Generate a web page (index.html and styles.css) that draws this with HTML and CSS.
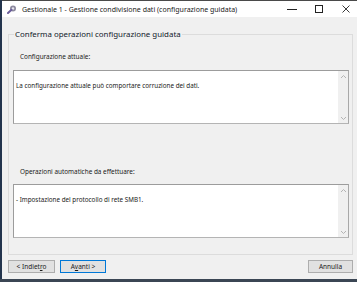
FILE: index.html
```html
<!DOCTYPE html>
<html lang="it">
<head>
    <meta charset="UTF-8">
    <title>Gestionale 1 - Gestione condivisione dati</title>
    <link rel="stylesheet" href="styles.css">
</head>
<body>

    <div class="window">
        <div class="titlebar">
            <svg class="app-icon" width="10" height="9" viewBox="0 0 10 9">
                <circle cx="6" cy="3.5" r="3" fill="#8d8a9e"/>
                <circle cx="6" cy="3.5" r="1.2" fill="#e8e6f0"/>
                <path d="M1 8 L4.5 4.8" stroke="#6b5d9a" stroke-width="2" stroke-linecap="round"/>
            </svg>
            <span class="title">Gestionale 1 - Gestione condivisione dati (configurazione guidata)</span>
            <div class="controls">
                <svg width="10" height="10" viewBox="0 0 10 10"><path d="M0 5.5 H10" stroke="#222" stroke-width="1"/></svg>
                <svg width="10" height="10" viewBox="0 0 10 10"><rect x="1.5" y="1.5" width="7" height="7" fill="none" stroke="#222" stroke-width="1"/></svg>
                <svg width="10" height="10" viewBox="0 0 10 10"><path d="M1.5 1.5 L8.5 8.5 M8.5 1.5 L1.5 8.5" stroke="#222" stroke-width="0.9"/></svg>
            </div>
        </div>

        <div class="content">
            <fieldset class="group">
                <legend>Conferma operazioni configurazione guidata</legend>

                <div class="field-label first">Configurazione attuale:</div>
                <div class="textbox">
                    <div class="textbox-text">La configurazione attuale può comportare corruzione dei dati.</div>
                    <div class="scrollbar">
                        <svg width="7" height="5" viewBox="0 0 7 5"><path d="M1 4 L3.5 1.5 L6 4" fill="none" stroke="#b4b4b4" stroke-width="1"/></svg>
                        <svg width="7" height="5" viewBox="0 0 7 5"><path d="M1 1 L3.5 3.5 L6 1" fill="none" stroke="#b4b4b4" stroke-width="1"/></svg>
                    </div>
                </div>

                <div class="field-label second">Operazioni automatiche da effettuare:</div>
                <div class="textbox">
                    <div class="textbox-text">- Impostazione del protocollo di rete SMB1.</div>
                    <div class="scrollbar">
                        <svg width="7" height="5" viewBox="0 0 7 5"><path d="M1 4 L3.5 1.5 L6 4" fill="none" stroke="#b4b4b4" stroke-width="1"/></svg>
                        <svg width="7" height="5" viewBox="0 0 7 5"><path d="M1 1 L3.5 3.5 L6 1" fill="none" stroke="#b4b4b4" stroke-width="1"/></svg>
                    </div>
                </div>
            </fieldset>

            <div class="buttons">
                <button class="btn back">&lt; Indiet<u>r</u>o</button>
                <button class="btn next default">A<u>v</u>anti &gt;</button>
                <span class="spacer"></span>
                <button class="btn cancel">Annulla</button>
            </div>
        </div>
    </div>

</body>
</html>
```

FILE: styles.css
```css
body {
    margin: 0;
    padding: 0;
    width: 357px;
    height: 282px;
    overflow: hidden;
    font-family: 'Noto Sans', 'Open Sans', sans-serif;
    color: #000;
    background: #3b4654;
}

.window {
    width: 355px;
    height: 279px;
    border-left: 2px solid #23344d;
    background: #f0f0f0;
    display: flex;
    flex-direction: column;
}

/* title bar */
.titlebar {
    height: 16px;
    background: #fff;
    border-top: 1px solid #4a4a4a;
    display: flex;
    align-items: center;
    padding-left: 5px;
}

.app-icon {
    margin-right: 5px;
}

.title {
    font-size: 7px;
    color: #1a1a1a;
    white-space: nowrap;
}

.controls {
    margin-left: auto;
    display: flex;
    gap: 17px;
    padding-right: 6px;
}

/* body */
.content {
    flex: 1;
    padding: 12px 4px 0 6px;
    display: flex;
    flex-direction: column;
}

.group {
    margin: 0;
    padding: 0 3px 16px 4px;
    border: 1px solid #dcdcdc;
    min-width: 0;
}

.group legend {
    font-size: 7.9px;
    line-height: 11px;
    color: #121a2c;
    padding: 0 1px;
    margin-left: 1px;
}

.field-label {
    font-size: 6.4px;
    line-height: 10px;
    padding-left: 7px;
    color: #1a1a1a;
}

.field-label.first {
    margin-top: 12px;
    margin-bottom: 8px;
}

.field-label.second {
    margin-top: 43px;
    margin-bottom: 7px;
}

.textbox {
    height: 52px;
    background: #fff;
    border: 1px solid #9c9c9c;
    border-right-color: #a8a8a8;
    border-bottom-color: #b4b4b4;
    display: flex;
}

.textbox-text {
    flex: 1;
    font-size: 6.3px;
    line-height: 10px;
    padding: 10px 2px 0 2px;
    color: #1a1a1a;
}

.scrollbar {
    width: 10px;
    background: #f0f0f0;
    display: flex;
    flex-direction: column;
    justify-content: space-between;
    align-items: center;
    padding: 3px 0 2px;
}

/* buttons */
.buttons {
    display: flex;
    margin-top: 5px;
    height: 13px;
}

.btn {
    font-family: 'Noto Sans', 'Open Sans', sans-serif;
    font-size: 6.5px;
    color: #1a1a1a;
    background: #e1e1e1;
    border: 1px solid #adadad;
    padding: 0;
    height: 13px;
    line-height: 11px;
}

.btn.back {
    width: 47px;
}

.btn.next {
    width: 46px;
    margin-left: 5px;
}

.btn.default {
    border-color: #0078d7;
}

.btn.cancel {
    width: 45px;
}

.spacer {
    flex: 1;
}
```
